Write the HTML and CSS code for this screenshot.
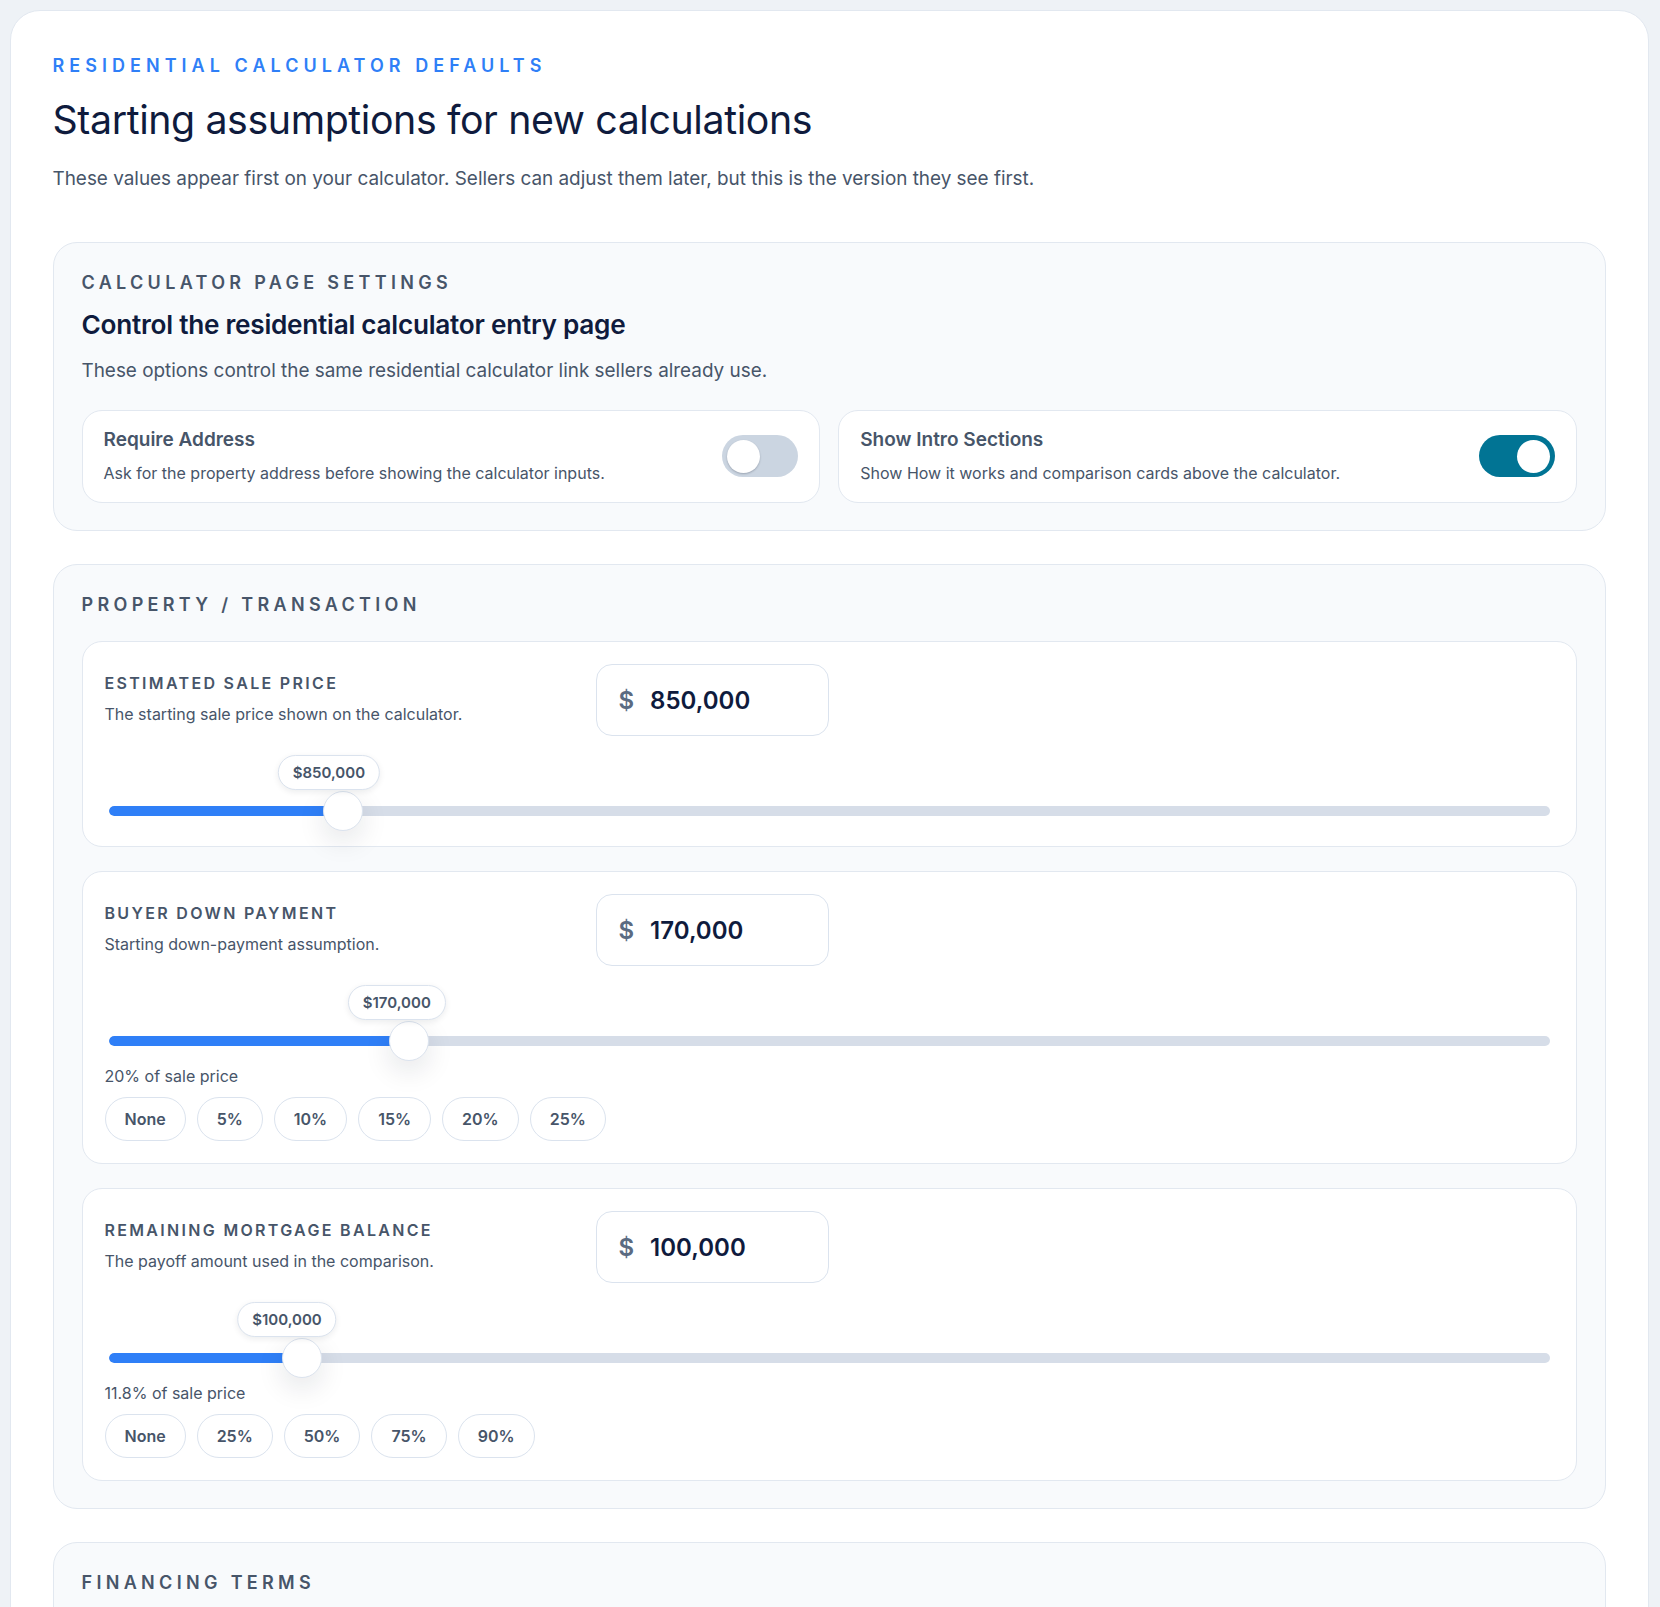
FILE: index.html
```html
<!DOCTYPE html>
<html lang="en">
<head>
<meta charset="utf-8">
<title>Residential calculator defaults</title>
<link rel="stylesheet" href="styles.css">
</head>
<body>
<main class="page">
  <div class="panel">
    <p class="eyebrow">Residential calculator defaults</p>
    <h1 class="title">Starting assumptions for new calculations</h1>
    <p class="lead">These values appear first on your calculator. Sellers can adjust them later, but this is the version they see first.</p>

    <section class="group">
      <h2 class="group-label">Calculator page settings</h2>
      <h3 class="group-heading">Control the residential calculator entry page</h3>
      <p class="group-desc">These options control the same residential calculator link sellers already use.</p>
      <div class="toggle-grid">
        <div class="toggle-card">
          <div class="toggle-text">
            <div class="toggle-title">Require Address</div>
            <div class="toggle-desc">Ask for the property address before showing the calculator inputs.</div>
          </div>
          <span class="switch"><span class="knob"></span></span>
        </div>
        <div class="toggle-card">
          <div class="toggle-text">
            <div class="toggle-title">Show Intro Sections</div>
            <div class="toggle-desc">Show How it works and comparison cards above the calculator.</div>
          </div>
          <span class="switch switch--on"><span class="knob"></span></span>
        </div>
      </div>
    </section>

    <section class="group">
      <h2 class="group-label">Property / Transaction</h2>
      <div class="field-list">
        <div class="field-card">
          <div class="field-head">
            <div class="field-info">
              <div class="field-label">Estimated sale price</div>
              <div class="field-desc">The starting sale price shown on the calculator.</div>
            </div>
            <div class="money-input"><span class="cur">$</span><span class="val">850,000</span></div>
          </div>
          <div class="slider" style="--p:0.1529">
            <div class="track"><div class="fill"></div></div>
            <div class="thumb"></div>
            <div class="bubble">$850,000</div>
          </div>
        </div>

        <div class="field-card">
          <div class="field-head">
            <div class="field-info">
              <div class="field-label">Buyer down payment</div>
              <div class="field-desc">Starting down-payment assumption.</div>
            </div>
            <div class="money-input"><span class="cur">$</span><span class="val">170,000</span></div>
          </div>
          <div class="slider" style="--p:0.2">
            <div class="track"><div class="fill"></div></div>
            <div class="thumb"></div>
            <div class="bubble">$170,000</div>
          </div>
          <p class="field-note">20% of sale price</p>
          <div class="chips">
            <button class="chip">None</button>
            <button class="chip">5%</button>
            <button class="chip">10%</button>
            <button class="chip">15%</button>
            <button class="chip">20%</button>
            <button class="chip">25%</button>
          </div>
        </div>

        <div class="field-card">
          <div class="field-head">
            <div class="field-info">
              <div class="field-label">Remaining mortgage balance</div>
              <div class="field-desc">The payoff amount used in the comparison.</div>
            </div>
            <div class="money-input"><span class="cur">$</span><span class="val">100,000</span></div>
          </div>
          <div class="slider" style="--p:0.1238">
            <div class="track"><div class="fill"></div></div>
            <div class="thumb"></div>
            <div class="bubble">$100,000</div>
          </div>
          <p class="field-note">11.8% of sale price</p>
          <div class="chips">
            <button class="chip">None</button>
            <button class="chip">25%</button>
            <button class="chip">50%</button>
            <button class="chip">75%</button>
            <button class="chip">90%</button>
          </div>
        </div>
      </div>
    </section>

    <section class="group group--tail">
      <h2 class="group-label">Financing terms</h2>
    </section>
  </div>
</main>
</body>
</html>
```
FILE: styles.css
```css
* { box-sizing: border-box; }

html, body {
  margin: 0;
  padding: 0;
  background: #eef2f6;
  font-family: Inter, "Noto Sans", "Liberation Sans", sans-serif;
  color: #0f1b3d;
}

.page {
  padding: 10px 11px 40px 9.5px;
}

.panel {
  background: #ffffff;
  border: 1px solid #e2e8f0;
  border-radius: 30px;
  padding: 42px 42px 42px;
}

.eyebrow {
  margin: 0;
  font-size: 18px;
  line-height: 26px;
  font-weight: 600;
  letter-spacing: 0.28em;
  text-transform: uppercase;
  color: #2f7ff7;
}

.title {
  margin: 18px 0 0;
  font-size: 39.3px;
  line-height: 46px;
  font-weight: 400;
  letter-spacing: -0.01em;
  color: #0f1b3d;
}

.lead {
  margin: 22px 0 0;
  font-size: 18.9px;
  line-height: 28px;
  color: #475569;
}

.group {
  margin-top: 49px;
  background: #f8fafc;
  border: 1px solid #e2e8f0;
  border-radius: 24px;
  padding: 28px 28px 27px;
}

.group + .group {
  margin-top: 33px;
}

.group--tail {
  min-height: 160px;
}

.group-label {
  margin: 0;
  font-size: 18px;
  line-height: 24px;
  font-weight: 600;
  letter-spacing: 0.24em;
  text-transform: uppercase;
  color: #475569;
}

.group-heading {
  margin: 14px 0 0;
  font-size: 26.2px;
  line-height: 32px;
  font-weight: 600;
  letter-spacing: -0.01em;
  color: #0f1b3d;
}

.group-desc {
  margin: 16px 0 0;
  font-size: 18.9px;
  line-height: 28px;
  color: #475569;
}

.toggle-grid {
  margin-top: 25px;
  display: grid;
  grid-template-columns: 1fr 1fr;
  gap: 18px;
}

.toggle-card {
  background: #ffffff;
  border: 1px solid #e2e8f0;
  border-radius: 20px;
  padding: 16px 21px 17px;
  display: flex;
  align-items: center;
  justify-content: space-between;
  gap: 20px;
}

.toggle-title {
  font-size: 19px;
  line-height: 26px;
  font-weight: 600;
  color: #475569;
}

.toggle-desc {
  margin-top: 8px;
  font-size: 16px;
  line-height: 24px;
  color: #475569;
}

.switch {
  flex: 0 0 auto;
  width: 76px;
  height: 42px;
  border-radius: 999px;
  background: #cbd5e1;
  display: flex;
  align-items: center;
  padding: 0 5px;
}

.switch .knob {
  width: 33px;
  height: 33px;
  border-radius: 50%;
  background: #ffffff;
  box-shadow: 0 1px 2px rgba(15, 23, 42, 0.25);
}

.switch--on {
  background: #017494;
  justify-content: flex-end;
}

.switch--on .knob {
  box-shadow: none;
}

.field-list {
  margin-top: 24px;
  display: flex;
  flex-direction: column;
  gap: 24px;
}

.field-card {
  background: #ffffff;
  border: 1px solid #e2e8f0;
  border-radius: 20px;
  padding: 22px 22px 22px;
}

.field-head {
  display: flex;
  align-items: flex-start;
  gap: 24px;
}

.field-info {
  flex: 0 0 467px;
  padding-top: 7px;
}

.field-label {
  font-size: 16px;
  line-height: 24px;
  font-weight: 600;
  letter-spacing: 0.145em;
  text-transform: uppercase;
  color: #475569;
}

.field-desc {
  margin-top: 7px;
  font-size: 16px;
  line-height: 24px;
  color: #475569;
}

.money-input {
  flex: 0 0 233px;
  height: 72px;
  border: 1px solid #dbe3ee;
  border-radius: 16px;
  background: #ffffff;
  display: flex;
  align-items: center;
  gap: 16px;
  padding: 0 22px;
}

.money-input .cur {
  font-size: 24px;
  font-weight: 600;
  color: #5b6b82;
}

.money-input .val {
  font-size: 24px;
  font-weight: 600;
  color: #0f1b3d;
}

.slider {
  position: relative;
  height: 26px;
  margin: 62px 4px 0;
}

.track {
  position: absolute;
  left: 0;
  right: 0;
  top: 8px;
  height: 10px;
  border-radius: 999px;
  background: #d6dde8;
  overflow: hidden;
}

.fill {
  height: 100%;
  width: calc(20px + var(--p) * (100% - 40px));
  background: #2f7ff7;
  border-radius: 999px 0 0 999px;
}

.thumb {
  position: absolute;
  top: -7px;
  left: calc(var(--p) * (100% - 40px));
  width: 40px;
  height: 40px;
  border-radius: 50%;
  background: #ffffff;
  border: 1px solid #dbe3ee;
  box-shadow: 0 10px 28px rgba(15, 23, 42, 0.11);
}

.bubble {
  position: absolute;
  bottom: calc(100% + 8px);
  left: calc(var(--p) * 100%);
  transform: translateX(-50%);
  height: 35px;
  padding: 0 14px;
  display: flex;
  align-items: center;
  background: #ffffff;
  border: 1px solid #dbe3ee;
  border-radius: 999px;
  box-shadow: 0 2px 6px rgba(15, 23, 42, 0.08);
  font-size: 15px;
  font-weight: 600;
  color: #475569;
  white-space: nowrap;
}

.field-note {
  margin: 10px 0 0;
  font-size: 16px;
  line-height: 24px;
  color: #475569;
}

.chips {
  margin-top: 9px;
  display: flex;
  flex-wrap: wrap;
  gap: 11px;
}

.chip {
  height: 44px;
  padding: 0 19px;
  border: 1px solid #dbe3ee;
  border-radius: 999px;
  background: #ffffff;
  font-family: inherit;
  font-size: 16px;
  font-weight: 600;
  color: #475569;
}
```
